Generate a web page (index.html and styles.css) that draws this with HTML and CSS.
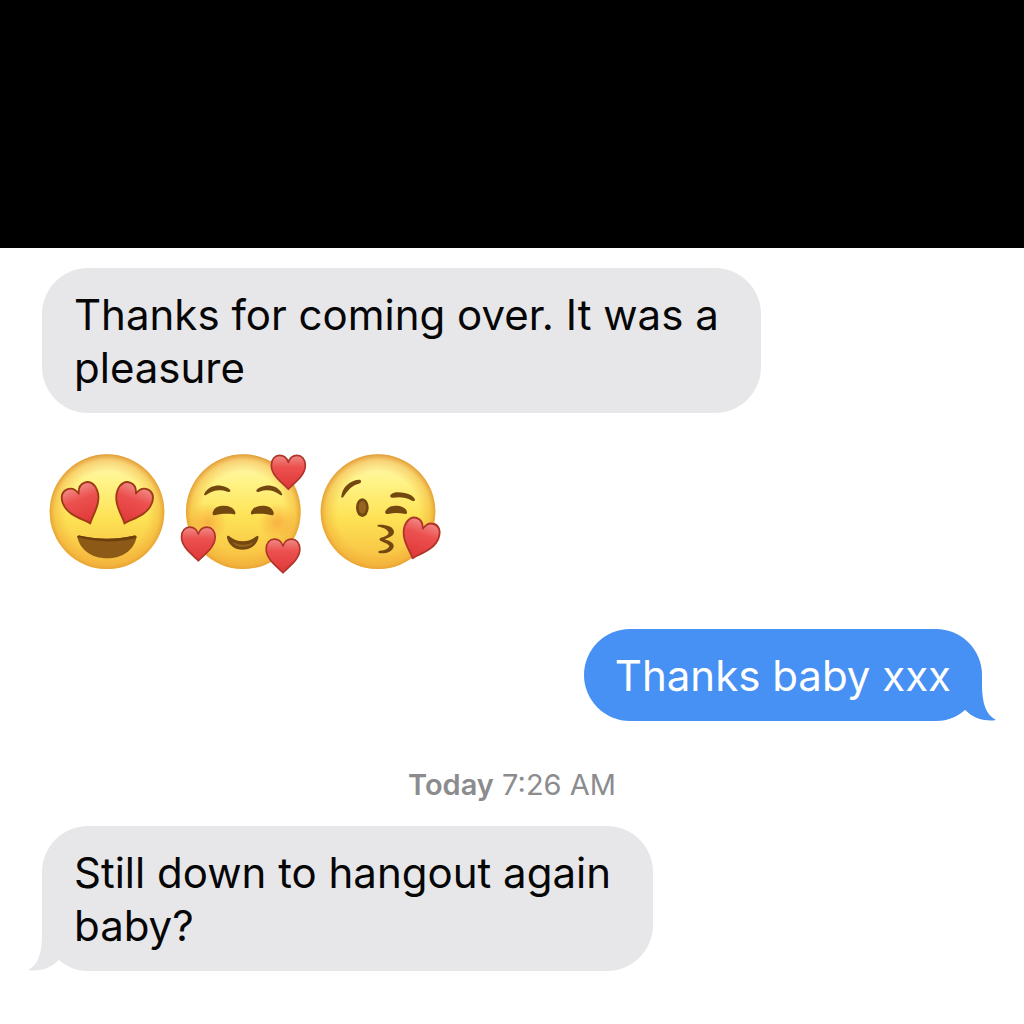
FILE: index.html
```html
<!DOCTYPE html>
<html lang="en">
<head>
<meta charset="utf-8">
<meta name="viewport" content="width=device-width, initial-scale=1">
<title>Messages</title>
<link rel="stylesheet" href="styles.css">
</head>
<body>
<svg class="defs" aria-hidden="true">
  <defs>
    <linearGradient id="face" x1="0" y1="0" x2="0" y2="1">
      <stop offset="0" stop-color="#fff8b8"/>
      <stop offset=".25" stop-color="#fff386"/>
      <stop offset=".55" stop-color="#fde255"/>
      <stop offset="1" stop-color="#f7bb40"/>
    </linearGradient>
    <radialGradient id="rim" cx=".5" cy=".51" r=".51">
      <stop offset=".7" stop-color="#f0a836" stop-opacity="0"/>
      <stop offset=".89" stop-color="#f0a836" stop-opacity=".45"/>
      <stop offset="1" stop-color="#df9630" stop-opacity=".95"/>
    </radialGradient>
    <radialGradient id="blush">
      <stop offset="0" stop-color="#f58632" stop-opacity=".5"/>
      <stop offset="1" stop-color="#f58632" stop-opacity="0"/>
    </radialGradient>
    <linearGradient id="red" x1="0" y1="0" x2="0" y2="1">
      <stop offset="0" stop-color="#f08a86"/>
      <stop offset=".35" stop-color="#ec514f"/>
      <stop offset="1" stop-color="#df3738"/>
    </linearGradient>
    <path id="heart" d="M0 51C-14 34-51 12-51-21C-51-40-40-51-26-51C-13-51-4-43 0-30C4-43 13-51 26-51C40-51 51-40 51-21C51 12 14 34 0 51Z" fill="url(#red)" stroke-width="5" stroke-linejoin="round"/>
  </defs>
</svg>
<header class="topbar"></header>
<main class="thread">
  <p class="bubble received">Thanks for coming over. It was a<br>pleasure</p>
  <div class="emojis">
    <svg class="emoji" viewBox="0 0 405 405" role="img" aria-label="Smiling face with heart eyes">
      <circle cx="201" cy="200" r="172" fill="url(#face)"/>
      <circle cx="201" cy="200" r="172" fill="url(#rim)"/>
      <use href="#heart" stroke="#9c3a16" transform="translate(129 179) rotate(-21) scale(1.08 1.18)"/>
      <use href="#heart" stroke="#9c3a16" transform="translate(275 179) rotate(21) scale(1.08 1.18)"/>
      <path d="M112 277C111 272 115 270 121 272C175 284 227 284 281 272C287 270 291 273 289 279C281 316 247 340 201 340C155 340 121 315 112 277Z" fill="#8c5a16"/>
      <path d="M112 277C111 272 115 270 121 272C175 284 227 284 281 272C287 270 291 273 289 279C234 293 168 293 112 277Z" fill="#6d3f0e"/>
    </svg>
    <svg class="emoji" viewBox="0 0 405 405" role="img" aria-label="Smiling face with hearts">
      <circle cx="205" cy="200" r="172" fill="url(#face)"/>
      <circle cx="205" cy="200" r="172" fill="url(#rim)"/>
      <circle cx="98" cy="232" r="58" fill="url(#blush)"/>
      <circle cx="308" cy="232" r="58" fill="url(#blush)"/>
      <g fill="#734710">
        <path d="M88 146C98 126 120 120 138 122C152 124 162 129 166 136C167 141 162 142 157 140C130 131 113 137 93 150C89 152 86 150 88 146Z"/>
        <path d="M321 146C311 126 290 120 272 122C258 124 248 129 244 136C243 141 248 142 253 140C280 131 297 137 316 150C320 152 323 150 321 146Z"/>
        <path d="M113 203C118 186 130 182 147 182C166 182 177 190 181 202C182 208 178 210 173 207C155 205 139 206 121 210C115 212 112 209 113 203Z"/>
        <path d="M296 203C291 186 279 182 262 182C243 182 232 190 228 202C227 208 231 210 236 207C254 205 270 206 288 210C294 212 297 209 296 203Z"/>
        <path d="M156 278C155 272 160 271 165 275C188 293 220 293 242 275C248 271 252 273 250 279C245 300 227 314 203 314C179 314 161 300 156 278Z"/>
      </g>
      <path d="M171 290C193 302 217 302 237 290C229 301 218 306 203 306C189 306 178 300 171 290Z" fill="#94631b"/>
      <use href="#heart" stroke="#ad3428" transform="translate(340 82)"/>
      <use href="#heart" stroke="#ad3428" transform="translate(70 297) scale(.99)"/>
      <use href="#heart" stroke="#ad3428" transform="translate(324 333) scale(.99)"/>
    </svg>
    <svg class="emoji" viewBox="-6 0 405 405" role="img" aria-label="Face blowing a kiss">
      <circle cx="198" cy="200" r="172" fill="url(#face)"/>
      <circle cx="198" cy="200" r="172" fill="url(#rim)"/>
      <g fill="#734710">
        <path d="M88 154C91 126 113 107 140 104C147 103 150 110 144 115C119 121 108 136 94 156C91 160 87 159 88 154Z"/>
        <path d="M236 149C247 140 260 141 278 144C294 147 306 155 309 164C309 168 305 169 300 167C280 156 264 155 243 158C236 159 232 154 236 149Z"/>
        <path d="M220 199C227 185 239 182 253 182C270 182 282 189 285 201C286 207 282 208 276 206C258 203 243 204 229 207C222 208 218 205 220 199Z"/>
        <ellipse cx="151" cy="188" rx="19" ry="28"/>
        <path d="M199 239C222 238 247 244 246 262C245 273 231 278 218 283C233 288 247 294 245 305C241 321 219 327 202 324C197 322 199 317 204 317C219 316 230 311 232 303C227 294 213 292 205 287C201 284 202 280 207 278C219 275 229 270 230 263C225 251 212 247 200 245C195 244 195 240 199 239Z"/>
      </g>
      <ellipse cx="151" cy="187" rx="11" ry="19" fill="#956420"/>
      <use href="#heart" stroke="#b03428" transform="translate(321 284) rotate(19) scale(1.06 1.16)"/>
    </svg>
  </div>
  <p class="bubble sent">Thanks baby xxx
    <svg class="tail" viewBox="0 0 36 46" aria-hidden="true"><path d="M22 0V10C22 28 26 40 36 45C24 47 13 43 5 35Z"/><path class="notch" d="M5 35Q-4 43-16 46H30Q15 46 5 35Z"/></svg>
  </p>
  <p class="stamp"><time><b>Today</b> 7:26 AM</time></p>
  <p class="bubble received">Still down to hangout again<br>baby?
    <svg class="tail" viewBox="0 0 36 46" aria-hidden="true"><path d="M22 0V10C22 28 26 40 36 45C24 47 13 43 5 35Z"/><path class="notch" d="M5 35Q-4 43-16 46H30Q15 46 5 35Z"/></svg>
  </p>
</main>
</body>
</html>
```
FILE: styles.css
```css
* { box-sizing: border-box; }

body {
  margin: 0;
  background: #fff;
  color: #060606;
  font-family: Inter, "Liberation Sans", sans-serif;
}

.defs {
  position: absolute;
  width: 0;
  height: 0;
}

.topbar {
  height: 248px;
  background: #000;
}

.thread {
  display: flex;
  flex-direction: column;
  align-items: flex-start;
  padding: 20px 42px 52px;
}

.bubble {
  position: relative;
  margin: 0;
  border-radius: 46px;
  font-size: 42px;
  line-height: 53px;
}

.received {
  padding: 20px 42px 19px 32px;
  background: #e7e7e9;
}

.sent {
  align-self: flex-end;
  padding: 20px 31px 19px;
  background: #4891f4;
  color: #fff;
}

/* Tail drawn for the right side; mirrored on received bubbles. */
.tail {
  position: absolute;
  right: -14px;
  bottom: 0;
  width: 36px;
  height: 46px;
  fill: #4891f4;
  overflow: visible;
}

.tail .notch { fill: #fff; }

.received .tail {
  right: auto;
  left: -14px;
  fill: #e7e7e9;
  transform: scaleX(-1);
}

.emojis {
  display: flex;
  margin: 32px 0 49px -2px;
}

.emoji {
  width: 135px;
  height: 135px;
}

.stamp {
  align-self: center;
  margin: 47px 0 25px;
  color: #8c8c8f;
  font-size: 29px;
  line-height: 33px;
}

.stamp b { font-weight: 600; }
```
